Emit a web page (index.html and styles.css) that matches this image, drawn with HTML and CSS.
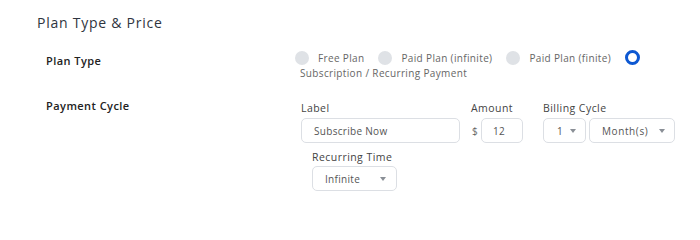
FILE: index.html
```html
<!DOCTYPE html>
<html>
<head>
<meta charset="utf-8">
<link rel="stylesheet" href="styles.css">
</head>
<body>
<div class="section">
  <h2 class="title">Plan Type &amp; Price</h2>
  <div class="row row-plan">
    <div class="row-label">Plan Type</div>
    <div class="radios">
      <span class="radio first"></span><span class="opt">Free Plan</span><span class="radio"></span><span class="opt">Paid Plan (infinite)</span><span class="radio"></span><span class="opt">Paid Plan (finite)</span><span class="radio checked"></span><span class="opt last">Subscription / Recurring Payment</span>
    </div>
  </div>
  <div class="row row-cycle">
    <div class="row-label">Payment Cycle</div>
    <div class="control">
      <div class="fields">
        <div class="field f-label">
          <div class="flabel">Label</div>
          <div class="input input-label">Subscribe Now</div>
        </div>
        <div class="field f-amount">
          <div class="flabel">Amount</div>
          <div class="amount-wrap"><span class="currency">$</span><div class="input input-amount">12</div></div>
        </div>
        <div class="field f-billing">
          <div class="flabel">Billing Cycle</div>
          <div class="selects">
            <div class="select sel-num"><span>1</span><i class="caret"></i></div>
            <div class="select sel-unit"><span>Month(s)</span><i class="caret"></i></div>
          </div>
        </div>
      </div>
      <div class="field f-recurring">
        <div class="flabel">Recurring Time</div>
        <div class="select sel-rec"><span>Infinite</span><i class="caret"></i></div>
      </div>
    </div>
  </div>
</div>
</body>
</html>
```

FILE: styles.css
```css
html, body {
  margin: 0;
  padding: 0;
  background: #ffffff;
}
body {
  font-family: "Open Sans", "Noto Sans", sans-serif;
  color: #333;
}
.section {
  padding: 12px 0 0 37px;
}
.title {
  margin: 0;
  font-size: 14px;
  font-weight: 400;
  line-height: 21px;
  letter-spacing: 0.75px;
  color: #2f3540;
}
.row {
  display: grid;
  grid-template-columns: 263px auto;
}
.row-label {
  padding-left: 9px;
  font-size: 11px;
  font-weight: 600;
  line-height: 15px;
  letter-spacing: 0.45px;
  color: #222;
}
.row-plan {
  margin-top: 17px;
}
.row-plan .row-label {
  margin-top: 3px;
}
.radios {
  width: 380px;
  font-size: 10px;
  line-height: 15px;
  letter-spacing: 0.35px;
  color: #666;
}
.radio {
  display: inline-block;
  width: 14px;
  height: 14px;
  border-radius: 50%;
  background: #dfe2e6;
  vertical-align: -3px;
  margin-right: 9px;
  box-sizing: border-box;
}
.radio.first {
  margin-left: -5px;
}
.radio.checked {
  background: #fff;
  border: 3px solid #0d58d2;
  width: 15px;
  height: 15px;
}
.opt {
  white-space: nowrap;
  margin-right: 14px;
}
.opt.last {
  margin-right: 0;
}
.row-cycle {
  margin-top: 17px;
}
.control {
  padding-left: 1px;
}
.fields {
  display: flex;
  align-items: flex-start;
}
.flabel {
  font-size: 10.5px;
  line-height: 15px;
  letter-spacing: 0.45px;
  color: #444;
  margin-top: 3px;
  margin-bottom: 2px;
}
.input, .select {
  box-sizing: border-box;
  height: 25px;
  border: 1px solid #dcdfe4;
  border-radius: 5px;
  font-size: 10px;
  letter-spacing: 0.3px;
  color: #555;
  display: flex;
  align-items: center;
  background: #fff;
}
.input-label {
  width: 159px;
  padding-left: 12px;
}
.f-amount {
  margin-left: 11px;
}
.amount-wrap {
  display: flex;
  align-items: center;
}
.currency {
  font-size: 10px;
  color: #666;
  width: 9px;
  margin-left: 1px;
}
.input-amount {
  width: 42px;
  padding-left: 11px;
}
.f-billing {
  margin-left: 20px;
}
.selects {
  display: flex;
  gap: 3px;
}
.select {
  justify-content: space-between;
}
.sel-num {
  width: 43px;
  padding: 0 9px 0 13px;
}
.sel-unit {
  width: 86px;
  padding: 0 9px 0 12px;
}
.sel-unit span {
  letter-spacing: 0.6px;
}
.f-recurring {
  margin-left: 11px;
}
.f-recurring .flabel {
  margin-top: 7px;
  margin-bottom: 1px;
}
.sel-rec {
  width: 85px;
  padding: 0 10px 0 12px;
}
.caret {
  width: 0;
  height: 0;
  border-left: 3.5px solid transparent;
  border-right: 3.5px solid transparent;
  border-top: 4px solid #8a8f96;
}
```
